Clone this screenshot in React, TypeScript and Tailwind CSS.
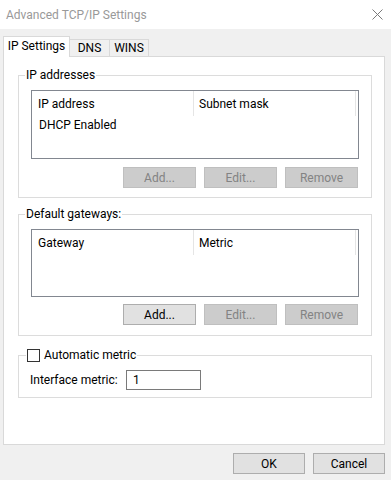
import React from "react";

const font = { fontFamily: "Roboto, 'Liberation Sans', sans-serif" };

function Btn({ children, disabled }: { children: React.ReactNode; disabled?: boolean }) {
  return (
    <div
      className={
        "w-[73px] h-[21px] flex items-center justify-center border text-[12px] " +
        (disabled
          ? "bg-[#cccccc] border-[#bfbfbf] text-[#838383]"
          : "bg-[#e1e1e1] border-[#adadad] text-black")
      }
    >
      {children}
    </div>
  );
}

function ListView({ c1, c2, rows, h }: { c1: string; c2: string; rows: string[]; h: string }) {
  return (
    <div className={"border border-[#828790] bg-white " + h}>
      <div className="flex h-[25px]">
        <div className="w-[162px] border-r border-[#e5e5e5] pl-[6px] flex items-center">{c1}</div>
        <div className="w-[162px] border-r border-[#e5e5e5] pl-[5px] flex items-center">{c2}</div>
      </div>
      {rows.map((r) => (
        <div key={r} className="h-[18px] pl-[7px] flex items-center">
          {r}
        </div>
      ))}
    </div>
  );
}

export default function App() {
  return (
    <div className="w-[391px] h-[480px] bg-[#f0f0f0] flex flex-col text-[12px] text-black" style={font}>
      {/* Title bar */}
      <div className="h-[29px] bg-white flex items-center justify-between pl-[6px] pr-[8px]">
        <span className="text-[#999999] text-[12px]">Advanced TCP/IP Settings</span>
        <svg width="11" height="11" viewBox="0 0 11 11" className="mb-[1px]">
          <path d="M0.5 0.5 L10.5 10.5 M10.5 0.5 L0.5 10.5" stroke="#7a7a7a" strokeWidth="1" />
        </svg>
      </div>

      {/* Tabs */}
      <div className="pt-[7px] pl-[3px] flex items-end -mb-px">
        <div className="relative z-10 h-[21px] w-[67px] bg-white border border-b-0 border-[#d9d9d9] flex items-start justify-center pt-[1px]">
          <span className="leading-[16px]">IP Settings</span>
        </div>
        <div className="h-[18px] w-[40px] bg-[#f0f0f0] border border-l-0 border-[#d9d9d9] flex items-center justify-center">
          DNS
        </div>
        <div className="h-[18px] w-[39px] bg-[#f0f0f0] border border-l-0 border-[#d9d9d9] flex items-center justify-center">
          WINS
        </div>
      </div>

      {/* Panel */}
      <div className="ml-[3px] w-[382px] h-[389px] border border-[#d9d9d9] bg-white pl-[14px] pr-[12px] pt-[10px]">
        <fieldset className="border border-[#dcdcdc] pb-[9px]">
          <legend className="ml-[6px] px-[1px] leading-[16px]">IP addresses</legend>
          <div className="px-[12px]">
            <div className="mt-[7px]">
              <ListView c1="IP address" c2="Subnet mask" rows={["DHCP Enabled"]} h="h-[69px]" />
            </div>
            <div className="mt-[8px] flex justify-end gap-[8px] pr-[1px]">
              <Btn disabled>Add...</Btn>
              <Btn disabled>Edit...</Btn>
              <Btn disabled>Remove</Btn>
            </div>
          </div>
        </fieldset>

        <fieldset className="mt-[8px] border border-[#dcdcdc] pb-[10px]">
          <legend className="ml-[6px] px-[1px] leading-[16px]">Default gateways:</legend>
          <div className="px-[12px]">
            <div className="mt-[7px]">
              <ListView c1="Gateway" c2="Metric" rows={[]} h="h-[68px]" />
            </div>
            <div className="mt-[7px] flex justify-end gap-[8px] pr-[1px]">
              <Btn>Add...</Btn>
              <Btn disabled>Edit...</Btn>
              <Btn disabled>Remove</Btn>
            </div>
          </div>
        </fieldset>

        <fieldset className="mt-[11px] border border-[#dcdcdc] pb-[7px]">
          <legend className="ml-[7px] px-[1px] leading-[16px] flex items-center gap-[4px]">
            <span className="w-[13px] h-[13px] border border-[#333333] bg-white" />
            <span>Automatic metric</span>
          </legend>
          <div className="mt-[7px] pl-[11px] flex items-center">
            <span className="w-[96px]">Interface metric:</span>
            <div className="w-[75px] h-[20px] border border-[#7a7a7a] bg-white flex items-center pl-[6px]">1</div>
          </div>
        </fieldset>
      </div>

      {/* Bottom buttons */}
      <div className="mt-[8px] flex justify-end gap-[8px] pr-[6px]">
        <div className="w-[72px] h-[21px] bg-[#e1e1e1] border border-[#adadad] flex items-center justify-center">OK</div>
        <div className="w-[72px] h-[21px] bg-[#e1e1e1] border border-[#adadad] flex items-center justify-center">Cancel</div>
      </div>
    </div>
  );
}
